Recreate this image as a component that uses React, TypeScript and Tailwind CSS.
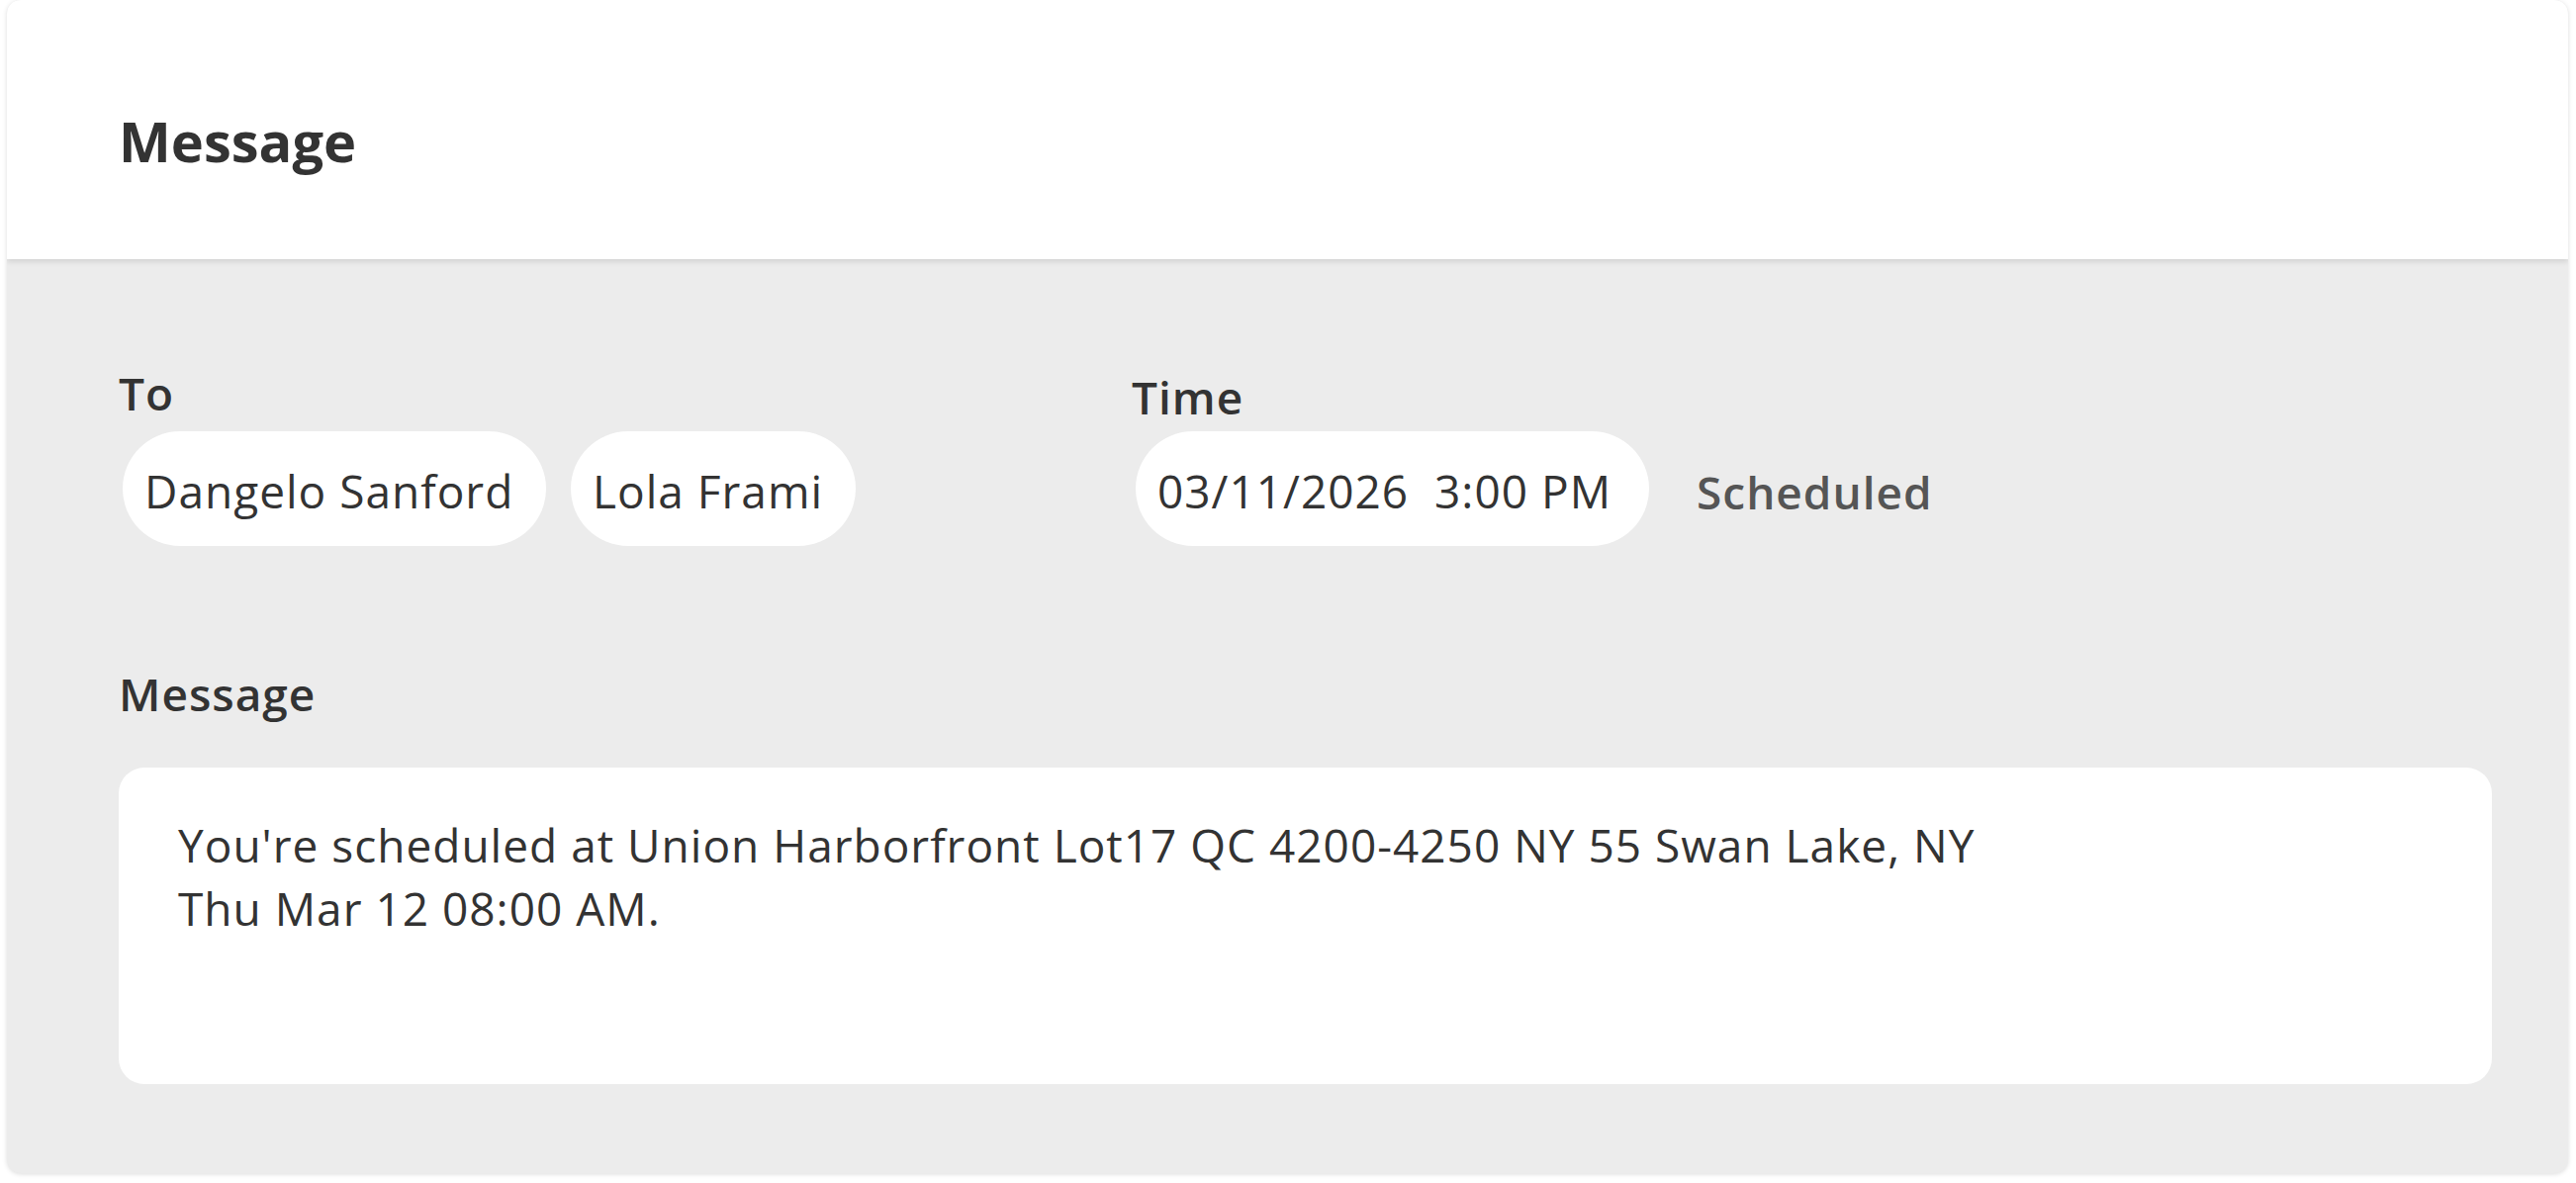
import React from "react";

function Chip({ children, w }: { children: React.ReactNode; w: string }) {
  return (
    <div className={`h-[116px] ${w} rounded-[58px] bg-white flex items-center pl-[22px] pt-[4px] text-[46px] leading-[56px] tracking-[1px] text-[#333333]`}>
      {children}
    </div>
  );
}

export default function App() {
  return (
    <div className="w-[2604px] h-[1196px] bg-white pl-[7px] pr-[8px] font-['Open_Sans',sans-serif]">
      <div className="h-[1186px] rounded-[14px] overflow-hidden bg-[#ececec] shadow-[0_1px_5px_rgba(0,0,0,0.14)] flex flex-col">
        <div className="h-[262px] shrink-0 bg-white pl-[113px] pt-[102px] relative z-10 shadow-[0_3px_5px_rgba(0,0,0,0.10)]">
          <h1 className="text-[56px] leading-[80px] font-bold text-[#333333]">Message</h1>
        </div>
        <div className="pl-[113px] pr-[77px] pt-[107px]">
          <div className="flex">
            <div className="w-[1024px] shrink-0">
              <div className="text-[46px] leading-[56px] tracking-[1px] font-semibold text-[#333333]">To</div>
              <div className="flex gap-[25px] mt-[11px] ml-[4px]">
                <Chip w="w-[428px]">Dangelo Sanford</Chip>
                <Chip w="w-[288px]">Lola Frami</Chip>
              </div>
            </div>
            <div>
              <div className="text-[46px] leading-[56px] tracking-[1px] font-semibold text-[#333333] mt-[4px] -mb-[4px]">Time</div>
              <div className="flex items-center mt-[11px] ml-[4px]">
                <Chip w="w-[519px]">03/11/2026&nbsp;&nbsp;3:00 PM</Chip>
                <span className="ml-[48px] pt-[6px] text-[46px] leading-[56px] tracking-[1px] font-semibold text-[#555555]">Scheduled</span>
              </div>
            </div>
          </div>
          <div className="mt-[121px] text-[46px] leading-[56px] tracking-[1px] font-semibold text-[#333333]">Message</div>
          <div className="mt-[47px] h-[320px] rounded-[26px] bg-white pl-[60px] pt-[46px] text-[46px] leading-[64px] tracking-[1px] text-[#333333]">
            <div>You're scheduled at Union Harborfront Lot17 QC 4200-4250 NY 55 Swan Lake, NY</div>
            <div>Thu Mar 12 08:00 AM.</div>
          </div>
        </div>
      </div>
    </div>
  );
}
